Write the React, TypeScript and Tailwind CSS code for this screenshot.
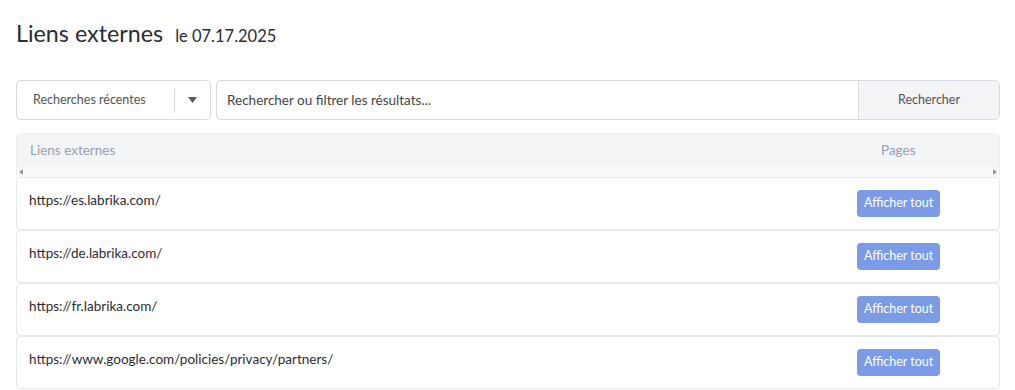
const rows = [
  "https://es.labrika.com/",
  "https://de.labrika.com/",
  "https://fr.labrika.com/",
  "https://www.google.com/policies/privacy/partners/",
];

export default function App() {
  return (
    <div
      className="w-[1015px] h-[390px] bg-white overflow-hidden text-[#333]"
      style={{ fontFamily: "Lato, 'Noto Sans', sans-serif" }}
    >
      <div className="pl-[16px] pr-[15px] pt-[22px]">
        <div className="flex items-baseline gap-[12px] h-[30px]">
          <h1 className="text-[23.3px] text-[#2b2b36] leading-none">Liens externes</h1>
          <span className="text-[16.5px] text-[#2b2b36] leading-none">le 07.17.2025</span>
        </div>

        <div className="flex mt-[28px] h-[40px] gap-[5px]">
          <div className="w-[195px] flex items-center border border-[#d8d9e3] rounded-[5px] pl-[16px]">
            <span className="text-[12.5px] text-[#555] flex-1">Recherches récentes</span>
            <div className="w-px h-[25px] bg-[#d8d9e3]" />
            <div className="w-[35px] flex justify-center">
              <svg width="9" height="6" viewBox="0 0 9 6">
                <path d="M0 0h9L4.5 6z" fill="#555a70" />
              </svg>
            </div>
          </div>
          <div className="flex-1 flex border border-[#d8d9e3] rounded-[5px] overflow-hidden">
            <div className="flex-1 flex items-center pl-[10px] text-[13.5px] text-[#444]">
              Rechercher ou filtrer les résultats...
            </div>
            <div className="w-[141px] bg-[#f3f4f6] border-l border-[#d8d9e3] flex items-center justify-center text-[12.5px] text-[#555]">
              Rechercher
            </div>
          </div>
        </div>

        <div className="mt-[13px]">
          <div className="bg-[#f3f4f6] rounded-t-[5px] border border-b-0 border-[#eceef2] h-[34px] flex items-center">
            <span className="pl-[13px] flex-1 text-[13.5px] text-[#97a0b8]">Liens externes</span>
            <span className="w-[142px] pl-[24px] text-[13.5px] text-[#97a0b8]">Pages</span>
          </div>
          <div className="h-[10px] bg-[#fafafa] border-x border-[#eceef2] flex items-center justify-between px-[2px]">
            <svg width="4" height="6" viewBox="0 0 4 6"><path d="M4 0v6L0 3z" fill="#999" /></svg>
            <svg width="4" height="6" viewBox="0 0 4 6"><path d="M0 0v6l4-3z" fill="#999" /></svg>
          </div>
          {rows.map((url) => (
            <div
              key={url}
              className="h-[53px] border border-[#e6e8f0] rounded-[4px] flex items-start"
            >
              <div className="flex-1 pl-[12px] pt-[12px] text-[13.5px] text-[#2b2b36]">{url}</div>
              <div className="w-[142px] pt-[12px] flex">
                <button className="h-[27px] px-[7px] rounded-[4px] bg-[#7b9be6] text-white text-[12.5px]">
                  Afficher tout
                </button>
              </div>
            </div>
          ))}
        </div>
      </div>
    </div>
  );
}
